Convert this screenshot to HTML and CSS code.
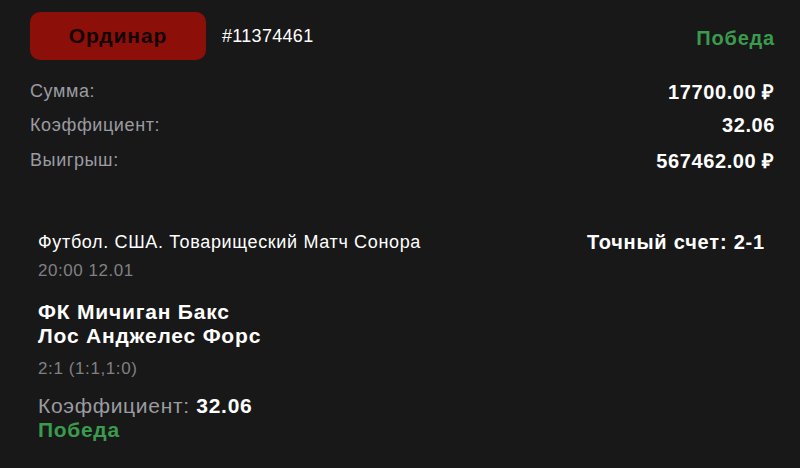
FILE: index.html
```html
<!DOCTYPE html>
<html lang="ru">
	<head>
		<meta charset="UTF-8">
		<title>Ставка</title>
		<link rel="stylesheet" href="styles.css">
	</head>
	<body>
		<div class="bet">
			<div class="bet-head">
				<div class="bet-head-left">
					<span class="bet-type">Ординар</span>
					<span class="bet-id">#11374461</span>
				</div>
				<span class="status win">Победа</span>
			</div>

			<div class="bet-rows">
				<div class="bet-row">
					<span class="label">Сумма:</span>
					<span class="value">17700.00 ₽</span>
				</div>
				<div class="bet-row">
					<span class="label">Коэффициент:</span>
					<span class="value">32.06</span>
				</div>
				<div class="bet-row">
					<span class="label">Выигрыш:</span>
					<span class="value">567462.00 ₽</span>
				</div>
			</div>

			<div class="event">
				<div class="event-top">
					<div class="event-league">Футбол. США. Товарищеский Матч Сонора</div>
					<div class="event-outcome">Точный счет: 2-1</div>
				</div>
				<div class="event-date">20:00 12.01</div>
				<div class="event-teams">
					<div>ФК Мичиган Бакс</div>
					<div>Лос Анджелес Форс</div>
				</div>
				<div class="event-score">2:1 (1:1,1:0)</div>
				<div class="event-coef">Коэффициент: <b>32.06</b></div>
				<div class="event-status win">Победа</div>
			</div>
		</div>
	</body>
</html>
```

FILE: styles.css
```css
body {
	margin: 0;
	background-color: #181818;
	color: #fff;
	font-family: "Liberation Sans", Arial, sans-serif;
	letter-spacing: 0.6px;
}

.bet {
	padding: 12px 25px 0 30px;
}

.bet-head {
	display: flex;
	align-items: center;
	justify-content: space-between;
}

.bet-head-left {
	display: flex;
	align-items: center;
	gap: 16px;
}

.bet-type {
	display: flex;
	align-items: center;
	justify-content: center;
	width: 176px;
	height: 48px;
	border-radius: 10px;
	background-color: #8c0f0a;
	color: #140404;
	font-size: 21px;
	font-weight: bold;
	letter-spacing: 0.9px;
}

.bet-id {
	font-size: 18px;
	font-weight: 500;
	letter-spacing: 0.3px;
}

.status {
	padding-top: 4px;
	font-size: 20px;
	font-weight: bold;
	letter-spacing: 0.8px;
}

.win {
	color: #3a9a4e;
}

.bet-rows {
	margin-top: 14px;
}

.bet-row {
	display: flex;
	justify-content: space-between;
	align-items: center;
	height: 34.5px;
}

.label {
	color: #9b9ba1;
	font-size: 18px;
}

.value {
	font-size: 20px;
	font-weight: bold;
}

.event {
	margin-top: 52px;
	padding: 0 10px 0 8px;
}

.event-top {
	display: flex;
	justify-content: space-between;
	align-items: center;
	line-height: 24px;
}

.event-league {
	font-size: 18px;
	letter-spacing: 0.65px;
}

.event-outcome {
	font-size: 20px;
	font-weight: bold;
	letter-spacing: 0.8px;
}

.event-date {
	margin-top: 7px;
	color: #808084;
	font-size: 17px;
	line-height: 20px;
	letter-spacing: 0.55px;
}

.event-teams {
	margin-top: 19px;
	font-size: 21px;
	font-weight: bold;
	line-height: 24.5px;
	letter-spacing: 0.8px;
}

.event-score {
	margin-top: 10px;
	color: #808084;
	font-size: 17px;
	line-height: 20px;
}

.event-coef {
	margin-top: 15px;
	color: #9b9ba1;
	font-size: 21px;
	line-height: 24px;
	letter-spacing: 0.7px;
}

.event-coef b {
	color: #fff;
}

.event-status {
	font-size: 21px;
	font-weight: bold;
	line-height: 24px;
	letter-spacing: 0.7px;
}
```
